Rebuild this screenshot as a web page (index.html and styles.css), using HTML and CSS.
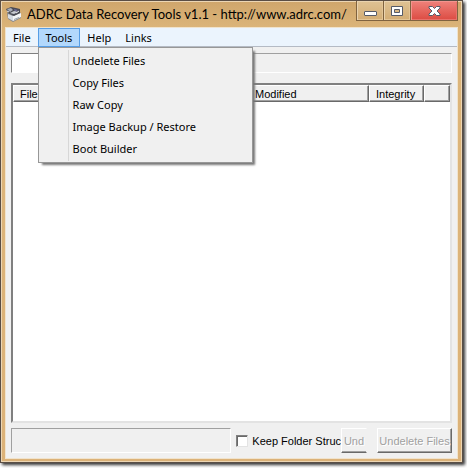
FILE: index.html
```
<!DOCTYPE html>
<html lang="en">
<head>
    <meta charset="UTF-8">
    <meta name="viewport" content="width=device-width, initial-scale=1.0">
    <title>ADRC Data Recovery Tools v1.1</title>
    <link rel="stylesheet" href="styles.css">
</head>
<body>
    <div class="window">
        <header class="title-bar">
            <svg class="app-icon" width="16" height="16" viewBox="0 0 16 16" aria-hidden="true">
                <path d="M1 7l8-3 6 3v5l-8 4-5-3z" fill="#85888f"/>
                <path d="M2 8l5 2v5l-5-3z" fill="#d5dbe3"/>
                <path d="M7 10l8-3v4l-8 4z" fill="#f4f6f8"/>
                <path d="M8 13l5-2v1l-5 2z" fill="#9aa2ac"/>
                <path d="M0 3l5-2 5 1 4 1v4l-6 3-6-3z" fill="#4a4b54"/>
                <path d="M1 3l4-1 2 2-3 2z" fill="#a8acb5"/>
                <path d="M8 3l4 1-3 2z" fill="#6f6b9a"/>
                <path d="M4 7l4-2 4 1-4 2z" fill="#c9ccd2"/>
                <path d="M1 5l2 1M10 7l3-2" stroke="#e8e8ee"/>
            </svg>
            <h1 class="title">ADRC Data Recovery Tools v1.1 - http://www.adrc.com/</h1>
            <div class="window-buttons">
                <button class="window-button" type="button" aria-label="Minimize">
                    <svg width="13" height="12" viewBox="0 0 13 12">
                        <rect x="0.5" y="6.5" width="12" height="4" rx="0.5" fill="#fff" stroke="#555a68"/>
                    </svg>
                </button>
                <button class="window-button" type="button" aria-label="Maximize">
                    <svg width="13" height="12" viewBox="0 0 13 12">
                        <path d="M0.500 1.500h11v9h-11zM3.500 4.500v3h5v-3z" fill="#fff" fill-rule="evenodd" stroke="#555a68"/>
                    </svg>
                </button>
                <button class="window-button close" type="button" aria-label="Close">
                    <svg width="13" height="12" viewBox="0 0 13 12">
                        <path d="M1 1.500h3.500l2 2 2-2H12v1.500L9 6l3 3v1.500H8.500l-2-2-2 2H1V9l3-3-3-3z" fill="#fff" stroke="#555a68"/>
                    </svg>
                </button>
            </div>
        </header>

        <div class="client">
            <nav class="menu-bar">
                <button class="menu-title" type="button">File</button>
                <div class="menu">
                    <button class="menu-title open" type="button" aria-expanded="true">Tools</button>
                    <div class="dropdown">
                        <button class="menu-item" type="button">Undelete Files</button>
                        <button class="menu-item" type="button">Copy Files</button>
                        <button class="menu-item" type="button">Raw Copy</button>
                        <button class="menu-item" type="button">Image Backup / Restore</button>
                        <button class="menu-item" type="button">Boot Builder</button>
                    </div>
                </div>
                <button class="menu-title" type="button">Help</button>
                <button class="menu-title" type="button">Links</button>
            </nav>

            <main class="content">
                <div class="tool-row">
                    <input class="drive" type="text" aria-label="Drive">
                    <div class="panel path"></div>
                </div>

                <div class="file-list">
                    <table class="files">
                        <thead>
                            <tr>
                                <th class="col-file">File</th>
                                <th class="col-modified">Modified</th>
                                <th class="col-integrity">Integrity</th>
                                <th></th>
                            </tr>
                        </thead>
                    </table>
                </div>

                <footer class="status-row">
                    <div class="panel status"></div>
                    <label class="keep">
                        <input class="check" type="checkbox">
                        <span>Keep Folder Struc</span>
                    </label>
                    <button class="push short" type="button" disabled>Und</button>
                    <button class="push" type="button" disabled>Undelete Files</button>
                </footer>
            </main>
        </div>
    </div>
</body>
</html>
```
FILE: styles.css
```
* {
    box-sizing: border-box;
}

body {
    display: flex;
    height: 100vh;
    margin: 0;
    padding: 0 4px 5px 0;
    background: #fff;
    overflow: hidden;
    font-family: "Liberation Sans", Arial, sans-serif;
    font-size: 11px;
    color: #000;
}

button,
input {
    margin: 0;
    padding: 0;
    border: 0;
    border-radius: 0;
    font: inherit;
    color: inherit;
    background: none;
}

.window {
    flex: 1;
    min-width: 0;
    display: flex;
    flex-direction: column;
    padding: 0 4px 3px;
    border: 1px solid #5a4e45;
    background: linear-gradient(to bottom, #cfa66c, #dcb57a 28px, #dcb278);
    box-shadow: inset 1px 1px 0 #ecd6b4, inset -1px -1px 0 #ecd6b4, 2px 2px 3px #333;
}

/* Title bar */

.title-bar {
    display: flex;
    align-items: center;
    height: 26px;
    padding-left: 1px;
}

.app-icon {
    flex: none;
    margin-right: 5px;
}

.title {
    flex: 1;
    min-width: 0;
    margin: 0;
    white-space: nowrap;
    font-family: Lato, sans-serif;
    font-size: 13px;
    font-weight: 400;
    line-height: 20px;
}

.window-buttons {
    display: flex;
    align-self: flex-start;
    border: 1px solid #80633f;
    border-top: 0;
}

.window-button {
    display: flex;
    align-items: center;
    justify-content: center;
    width: 27px;
    height: 19px;
    border-right: 1px solid #80633f;
    background: linear-gradient(to bottom, #dfc294, #d3ad75);
    box-shadow: inset 1px 1px 0 #ead3af, inset -1px -1px 0 #e3c596;
}

.window-button.close {
    width: 46px;
    border-right: 0;
    background: linear-gradient(to bottom, #ef827b, #dc4b42);
    box-shadow: inset 1px 1px 0 #f3958f, inset -1px -1px 0 #e8706a;
}

/* Menu bar */

.client {
    flex: 1;
    min-height: 0;
    display: flex;
    flex-direction: column;
    border: 1px solid #f0e3cd;
    background: #f0f0f0;
}

.menu-bar {
    display: flex;
    height: 19px;
    border-bottom: 1px solid #b4bac4;
    background: #ebf4fd;
    font-family: "Noto Sans", sans-serif;
    font-size: 11px;
}

.menu {
    position: relative;
}

.menu-title {
    height: 19px;
    padding: 0 7px;
    line-height: 17px;
}

.menu-title.open {
    border: 1px solid #569de5;
    background: #b2d8fc;
}

.dropdown {
    position: absolute;
    top: 19px;
    left: 0;
    z-index: 1;
    display: flex;
    flex-direction: column;
    width: 215px;
    padding: 2px 0;
    border: 1px solid #979797;
    background: linear-gradient(#d7d7d7, #d7d7d7) 29px 2px / 1px 111px no-repeat #f0f0f0;
    box-shadow: 3px 3px 2px -1px #777;
}

.menu-item {
    height: 22px;
    padding-left: 34px;
    line-height: 22px;
    text-align: left;
}

/* Client area */

.content {
    flex: 1;
    min-height: 0;
    display: flex;
    flex-direction: column;
    padding: 6px 5px 5px;
}

.panel {
    border: 1px solid;
    border-color: #a0a0a0 #fff #fff #a0a0a0;
}

.tool-row {
    display: flex;
    height: 20px;
    margin-bottom: 10px;
}

.drive {
    width: 100px;
    border: 1px solid;
    border-color: #808080 #fff #fff #808080;
    background: #fff;
}

.path {
    flex: 1;
}

.file-list {
    flex: 1;
    min-height: 0;
    border: 2px solid;
    border-color: #808080 #e3e3e3 #e3e3e3 #808080;
    background: #fff;
}

.files {
    width: 100%;
    border-collapse: separate;
    border-spacing: 0;
    table-layout: fixed;
}

.files th {
    height: 17px;
    padding: 0 6px;
    border: 1px solid;
    border-color: #fff #696969 #696969 #fff;
    box-shadow: inset -1px -1px 0 #a0a0a0;
    background: #f0f0f0;
    font-weight: 400;
    line-height: 14px;
    text-align: left;
}

.col-file {
    width: 235px;
}

.col-modified {
    width: 121px;
}

.col-integrity {
    width: 55px;
}

/* Bottom row */

.status-row {
    display: flex;
    align-items: center;
    height: 25px;
    margin-top: 5px;
}

.status {
    flex: 1;
    height: 25px;
    margin-right: 5px;
}

.keep {
    display: flex;
    align-items: center;
    gap: 4px;
    white-space: nowrap;
}

.check {
    flex: none;
    appearance: none;
    width: 12px;
    height: 12px;
    border: 1px solid;
    border-color: #808080 #e3e3e3 #e3e3e3 #808080;
    box-shadow: inset 1px 1px 0 #696969;
    background: #fff;
}

.push {
    width: 75px;
    height: 25px;
    border: 1px solid;
    border-color: #fff #696969 #696969 #fff;
    box-shadow: inset -1px -1px 0 #a0a0a0;
    background: #f0f0f0;
    color: #a0a0a0;
    text-shadow: 1px 1px 0 #fff;
    white-space: nowrap;
}

.push.short {
    width: 26px;
    margin-right: 10px;
    border-right-color: #f0f0f0;
    box-shadow: inset 0 -1px 0 #a0a0a0;
}
```
